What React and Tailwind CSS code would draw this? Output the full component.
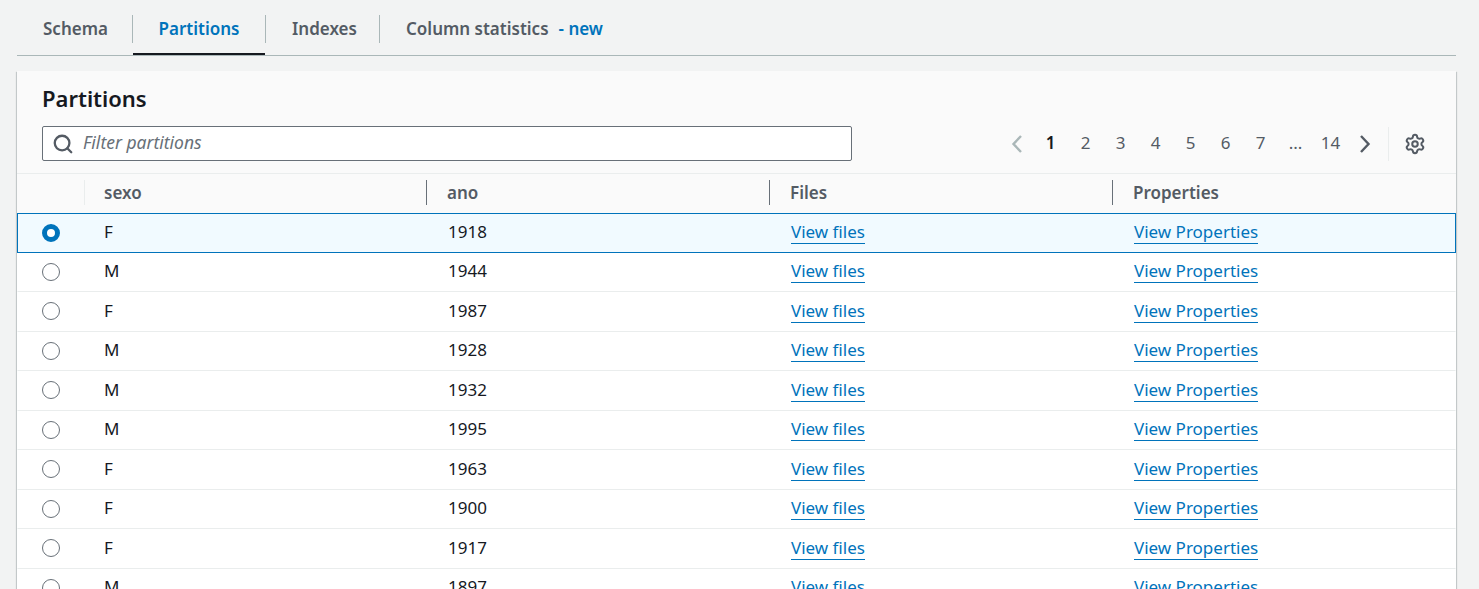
import { Search, Settings } from 'lucide-react'

const rows = [
  ['F', '1918'],
  ['M', '1944'],
  ['F', '1987'],
  ['M', '1928'],
  ['M', '1932'],
  ['M', '1995'],
  ['F', '1963'],
  ['F', '1900'],
  ['F', '1917'],
  ['M', '1897'],
]

const pages = ['1', '2', '3', '4', '5', '6', '7', '...', '14']

function Chevron({ d, className }) {
  return (
    <svg width="12" height="18" viewBox="0 0 12 18" fill="none" stroke="currentColor" strokeWidth="2.4" className={className}>
      <path d={d} />
    </svg>
  )
}

export default function App() {
  return (
    <div className="h-[589px] overflow-hidden bg-[#f2f3f3] pl-[17px] pr-[23px] font-['Noto_Sans',sans-serif] text-[17px] text-[#16191f]">

      {/* Tabs */}
      <div className="flex h-[56px] items-end border-b border-[#aab7b8] font-semibold text-[#545b64]">
        <div className="flex h-[55px] w-[115px] items-center pt-[2px] pl-[26px]">
          <span>Schema</span>
        </div>
        <div className="mb-[12px] h-[28px] w-px bg-[#aab7b8]" />
        <div className="flex h-[55px] w-[132px] items-center justify-center border-b-2 border-[#16191f] pt-[4px] text-[#0073bb]">
          <span>Partitions</span>
        </div>
        <div className="mb-[12px] h-[28px] w-px bg-[#aab7b8]" />
        <div className="flex h-[55px] w-[113px] items-center pt-[2px] pl-[26px]">
          <span>Indexes</span>
        </div>
        <div className="mb-[12px] h-[28px] w-px bg-[#aab7b8]" />
        <div className="flex h-[55px] items-center pt-[2px] pl-[26px]">
          <span>Column statistics</span>
          <span className="ml-[10px] text-[#0073bb]">- new</span>
        </div>
      </div>

      {/* Card */}
      <div className="mt-[15px] bg-white shadow-[0_1px_1px_0_rgba(0,28,36,0.3),1px_1px_1px_0_rgba(0,28,36,0.15),-1px_1px_1px_0_rgba(0,28,36,0.15)]">
        <div className="h-[103px] border-b border-[#eaeded] bg-[#fafafa] px-[25px] pt-[13px]">
          <h2 className="text-[22px] leading-[28px] font-semibold">Partitions</h2>
          <div className="mt-[14px] flex items-center justify-between">
            <div className="flex h-[35px] w-[810px] items-center rounded-[2px] border border-[#687078] bg-white pl-[9px]">
              <Search size={22} strokeWidth={2.5} className="text-[#545b64]" />
              <span className="ml-[9px] pb-[2px] text-[17.5px] italic text-[#687078]">Filter partitions</span>
            </div>
            <div className="flex items-center text-[#545b64]">
              <Chevron d="M10 1 L2.5 9 L10 17" className="mr-[10px] text-[#aab7b8]" />
              {pages.map((p, i) => (
                <span key={p} className={`w-[35px] pb-[1px] text-center ${i === 0 ? 'font-semibold text-[#16191f]' : ''}`}>{p}</span>
              ))}
              <Chevron d="M2 1 L9.5 9 L2 17" className="ml-[11px]" />
              <div className="ml-[17px] h-[34px] w-px bg-[#eaeded]" />
              <Settings size={22} strokeWidth={2.2} className="ml-[15px] mr-[5px]" />
            </div>
          </div>
        </div>

        {/* Table header */}
        <div className="flex h-[39px] items-center bg-[#fafafa] pb-[2px] font-semibold text-[#545b64]">
          <div className="h-[25px] w-[68px] border-r border-[#eaeded]" />
          <div className="flex h-[25px] w-[342px] items-center border-r border-[#687078] pl-[19px]">sexo</div>
          <div className="flex h-[25px] w-[343px] items-center border-r border-[#687078] pl-[20px]">ano</div>
          <div className="flex h-[25px] w-[343px] items-center border-r border-[#687078] pl-[20px]">Files</div>
          <div className="flex h-[25px] items-center pl-[20px]">Properties</div>
        </div>

        {/* Rows */}
        {rows.map((r, i) => (
          <div
            key={i}
            className={`flex h-[39.5px] items-center border-x border-b ${i === 0 ? 'border-t border-[#0073bb] bg-[#f1faff]' : 'border-x-transparent border-b-[#eaeded]'}`}
          >
            <div className="flex w-[66px] justify-center">
              {i === 0 ? (
                <div className="h-[18px] w-[18px] rounded-full border-[5px] border-[#0073bb] bg-white" />
              ) : (
                <div className="h-[18px] w-[18px] rounded-full border border-[#687078] bg-white" />
              )}
            </div>
            <div className="w-[344px] pb-[2px] pl-[20px]">{r[0]}</div>
            <div className="w-[343px] pb-[2px] pl-[20px]">{r[1]}</div>
            <div className="w-[343px] pb-[2px] pl-[20px]">
              <span className="border-b border-[#0073bb] text-[#0073bb]">View files</span>
            </div>
            <div className="pb-[2px] pl-[20px]">
              <span className="border-b border-[#0073bb] text-[#0073bb]">View Properties</span>
            </div>
          </div>
        ))}
      </div>
    </div>
  )
}
